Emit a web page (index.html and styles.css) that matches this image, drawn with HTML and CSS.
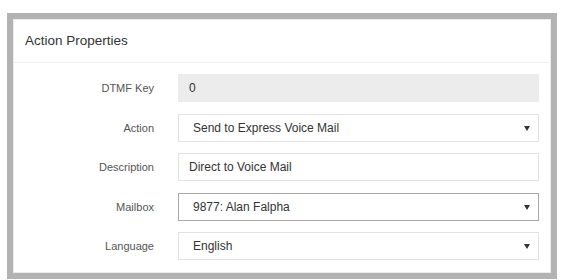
FILE: index.html
```html
<!DOCTYPE html>
<html lang="en">
<head>
<meta charset="UTF-8">
<title>Action Properties</title>
<link rel="stylesheet" href="styles.css">
</head>
<body>
    <div class="cornice">
        <div class="pannello">
            <div class="intestazione">Action Properties</div>
            <form class="modulo">
                <label class="etichetta">DTMF Key</label>
                <div class="campo disabilitato">0</div>

                <label class="etichetta">Action</label>
                <div class="campo scelta">Send to Express Voice Mail<span class="freccia"></span></div>

                <label class="etichetta">Description</label>
                <div class="campo testo">Direct to Voice Mail</div>

                <label class="etichetta">Mailbox</label>
                <div class="campo scelta attivo">9877: Alan Falpha<span class="freccia"></span></div>

                <label class="etichetta">Language</label>
                <div class="campo scelta">English<span class="freccia"></span></div>
            </form>
        </div>
    </div>
</body>
</html>
```

FILE: styles.css
```css
body {margin: 0; background: #ffffff; font-family: "Liberation Sans", Arial, sans-serif; color: #333333;}
.cornice {margin: 13px 0 0 7px; width: 538px; height: 254px; border: 6px solid #b3b3b3;}
.pannello {height: 252px; border: 1px solid #ececec; background: #ffffff;}
.intestazione {height: 42px; line-height: 42px; padding-left: 11px; font-size: 13.5px; color: #333333; border-bottom: 1px solid #f0f0f0;}
.modulo {display: grid; grid-template-columns: 140px 1fr; column-gap: 24px; row-gap: 11.5px; padding: 11px 11px 0 0;}
.etichetta {font-size: 11px; color: #555555; text-align: right; line-height: 28px;}
.campo {position: relative; height: 26px; line-height: 26px; border: 1px solid #e3e3e3; font-size: 12px; color: #333333; padding-left: 10px;}
.disabilitato {background: #ececec; border-color: #ececec;}
.scelta {padding-left: 14px;}
.attivo {border-color: #a8a8a8;}
.freccia {position: absolute; right: 8px; top: 11px; width: 0; height: 0; border-left: 3px solid transparent; border-right: 3px solid transparent; border-top: 5px solid #333333;}
```
